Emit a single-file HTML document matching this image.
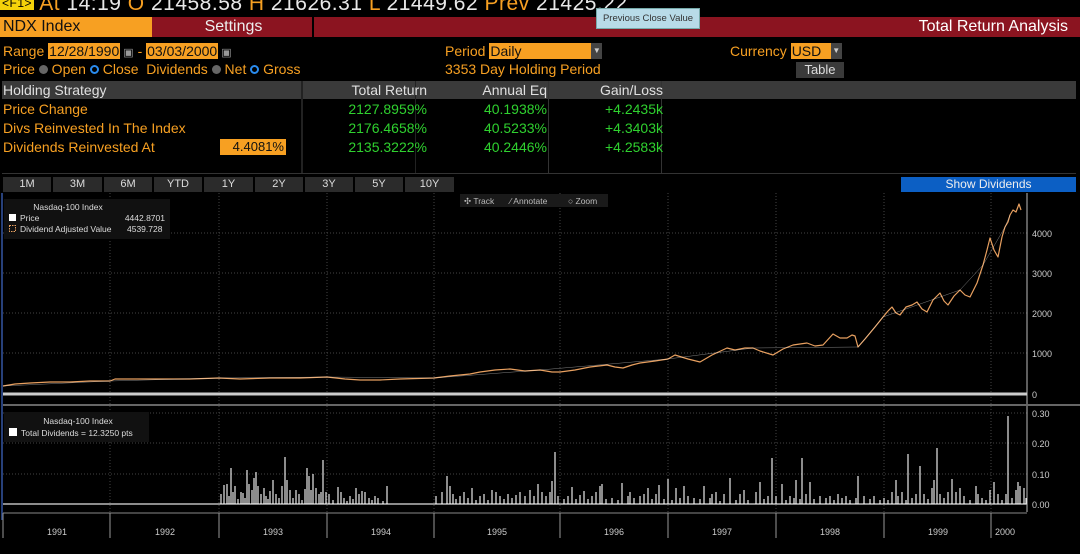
<!DOCTYPE html>
<html><head><meta charset="utf-8"><style>
*{margin:0;padding:0;box-sizing:border-box}
body{width:1080px;height:554px;background:#000;overflow:hidden;position:relative;font-family:"Liberation Sans",sans-serif;color:#f7a022}
.a{position:absolute;white-space:nowrap}
.o{color:#f7a022}.w{color:#e8e8e8}.g{color:#2fd12f}
.box{background:#f7a022;color:#111;padding:0 1px}
.hdr{background:#3a3a3a;color:#e0e0e0}
.btn{position:absolute;top:177px;height:15px;background:#2b2b2b;color:#ddd;font-size:11px;text-align:center;line-height:15px}
.rad{display:inline-block;width:9px;height:9px;border-radius:50%;vertical-align:0px}
</style></head><body>
<div class="a" style="left:0;top:-8px;font-size:21px;color:#f7a022;letter-spacing:0.5px"><span style="background:#f5d20a;color:#000;font-size:12px;padding:0 2px;vertical-align:3px">&lt;F1&gt;</span> At <span class="w">14:19</span>  O <span class="w">21458.58</span>  H <span class="w">21626.31</span>  L <span class="w">21449.62</span>  Prev <span class="w">21425.22</span></div>
<div class="a" style="left:0;top:17px;width:1080px;height:20px;background:#8b1420"></div>
<div class="a" style="left:0;top:17px;width:152px;height:20px;background:#f7a022;color:#111;font-size:16px;line-height:20px;padding-left:3px">NDX Index</div>
<div class="a" style="left:155px;top:17px;width:157px;height:20px;color:#eee;font-size:16px;line-height:20px;text-align:center">Settings</div>
<div class="a" style="left:312px;top:17px;width:2px;height:20px;background:#000"></div>
<div class="a" style="right:12px;top:17px;color:#fff;font-size:16px;line-height:20px">Total Return Analysis</div>
<div class="a" style="left:596px;top:8px;width:104px;height:21px;background:#b8dbe8;color:#333;font-size:9.5px;line-height:20px;text-align:center;border:1px solid #7aa">Previous Close Value</div>
<div class="a" style="left:3px;top:43px;font-size:14px">Range <span class="box">12/28/1990</span><span style="color:#999;font-size:11px"> ▣</span> - <span class="box">03/03/2000</span><span style="color:#999;font-size:11px"> ▣</span></div>
<div class="a" style="left:3px;top:61px;font-size:14px">Price <span class="rad" style="background:#666"></span> Open <span class="rad" style="border:2px solid #2a8cf0"></span> Close &nbsp;Dividends <span class="rad" style="background:#666"></span> Net <span class="rad" style="border:2px solid #2a8cf0"></span> Gross</div>
<div class="a" style="left:445px;top:43px;font-size:14px;line-height:16px">Period <span class="box" style="display:inline-block;width:102px;height:16px;line-height:16px;vertical-align:top">Daily</span><span style="display:inline-block;width:11px;height:16px;background:#444;color:#ccc;font-size:8px;text-align:center;vertical-align:top;line-height:16px">▼</span></div>
<div class="a" style="left:445px;top:61px;font-size:14px">3353 Day Holding Period</div>
<div class="a" style="left:730px;top:43px;font-size:14px;line-height:16px">Currency <span class="box" style="display:inline-block;width:40px;height:16px;line-height:16px;vertical-align:top">USD</span><span style="display:inline-block;width:11px;height:16px;background:#444;color:#ccc;font-size:8px;text-align:center;vertical-align:top;line-height:16px">▼</span></div>
<div class="a" style="left:796px;top:62px;width:48px;height:16px;background:#3a3a3a;color:#ddd;font-size:13px;text-align:center;line-height:16px">Table</div>
<div class="a hdr" style="left:2px;top:81px;width:1074px;height:18px"></div>
<div class="a" style="left:301px;top:81px;width:2px;height:93px;background:#222"></div>
<div class="a" style="left:415px;top:81px;width:1px;height:93px;background:#222"></div>
<div class="a" style="left:548px;top:81px;width:1px;height:93px;background:#333"></div>
<div class="a" style="left:661px;top:81px;width:1px;height:93px;background:#333"></div>
<div class="a" style="left:2px;top:173px;width:1074px;height:1px;background:#333"></div>
<div class="a" style="left:3px;top:81px;font-size:14px;color:#e0e0e0;line-height:18px">Holding Strategy</div>
<div class="a" style="left:303px;top:81px;width:124px;text-align:right;font-size:14px;color:#e0e0e0;line-height:18px">Total Return</div>
<div class="a" style="left:430px;top:81px;width:117px;text-align:right;font-size:14px;color:#e0e0e0;line-height:18px">Annual Eq</div>
<div class="a" style="left:550px;top:81px;width:113px;text-align:right;font-size:14px;color:#e0e0e0;line-height:18px">Gain/Loss</div>
<div class="a" style="left:3px;top:100px;font-size:14px;line-height:19px">Price Change<br>Divs Reinvested In The Index<br>Dividends Reinvested At</div>
<div class="a" style="left:220px;top:139px;width:66px;height:16px;background:#f7a022;color:#111;font-size:13px;text-align:right;line-height:16px;padding-right:2px">4.4081%</div>
<div class="a g" style="left:303px;top:100px;width:124px;text-align:right;font-size:14px;line-height:19px">2127.8959%<br>2176.4658%<br>2135.3222%</div>
<div class="a g" style="left:430px;top:100px;width:117px;text-align:right;font-size:14px;line-height:19px">40.1938%<br>40.5233%<br>40.2446%</div>
<div class="a g" style="left:550px;top:100px;width:113px;text-align:right;font-size:14px;line-height:19px">+4.2435k<br>+4.3403k<br>+4.2583k</div>
<div class="btn" style="left:3px;width:48px">1M</div>
<div class="btn" style="left:53px;width:49px">3M</div>
<div class="btn" style="left:104px;width:48px">6M</div>
<div class="btn" style="left:154px;width:48px">YTD</div>
<div class="btn" style="left:204px;width:49px">1Y</div>
<div class="btn" style="left:255px;width:48px">2Y</div>
<div class="btn" style="left:305px;width:48px">3Y</div>
<div class="btn" style="left:355px;width:48px">5Y</div>
<div class="btn" style="left:405px;width:49px">10Y</div>
<div class="a" style="left:901px;top:177px;width:175px;height:15px;background:#0c5fc4;color:#eee;font-size:12px;text-align:center;line-height:15px">Show Dividends</div>
<svg class="a" style="left:0;top:193px" width="1080" height="361" viewBox="0 193 1080 361">
<g stroke="#444" stroke-width="1" stroke-dasharray="1,2">
<line x1="3" y1="233" x2="1027" y2="233"/><line x1="3" y1="273" x2="1027" y2="273"/><line x1="3" y1="313" x2="1027" y2="313"/><line x1="3" y1="353" x2="1027" y2="353"/>
<line x1="3" y1="443" x2="1027" y2="443"/><line x1="3" y1="474" x2="1027" y2="474"/><line x1="3" y1="413" x2="1027" y2="413"/>
<line x1="110" y1="193" x2="110" y2="512"/><line x1="219" y1="193" x2="219" y2="512"/><line x1="327" y1="193" x2="327" y2="512"/><line x1="434" y1="193" x2="434" y2="512"/><line x1="560" y1="193" x2="560" y2="512"/><line x1="668" y1="193" x2="668" y2="512"/><line x1="776" y1="193" x2="776" y2="512"/><line x1="884" y1="193" x2="884" y2="512"/><line x1="991" y1="193" x2="991" y2="512"/>
</g>
<line x1="2" y1="193" x2="2" y2="520" stroke="#27407a" stroke-width="2"/>
<line x1="1027" y1="193" x2="1027" y2="512" stroke="#bbb" stroke-width="1"/>
<line x1="3" y1="394" x2="1027" y2="394" stroke="#ccc" stroke-width="3"/>
<line x1="3" y1="405" x2="1080" y2="405" stroke="#666" stroke-width="2"/>
<line x1="3" y1="504" x2="1027" y2="504" stroke="#bbb" stroke-width="1.5"/>
<line x1="3" y1="513" x2="1027" y2="513" stroke="#888" stroke-width="1"/>
<g stroke="#999" stroke-width="1"><line x1="3" y1="513" x2="3" y2="538"/><line x1="110" y1="513" x2="110" y2="538"/><line x1="219" y1="513" x2="219" y2="538"/><line x1="327" y1="513" x2="327" y2="538"/><line x1="434" y1="513" x2="434" y2="538"/><line x1="560" y1="513" x2="560" y2="538"/><line x1="668" y1="513" x2="668" y2="538"/><line x1="776" y1="513" x2="776" y2="538"/><line x1="884" y1="513" x2="884" y2="538"/><line x1="991" y1="513" x2="991" y2="538"/></g>
<g fill="#ccc" font-size="9" font-family="Liberation Sans,sans-serif">
<text x="1032" y="237">4000</text><text x="1032" y="277">3000</text><text x="1032" y="317">2000</text><text x="1032" y="357">1000</text><text x="1032" y="398">0</text>
<text x="1032" y="417">0.30</text><text x="1032" y="447">0.20</text><text x="1032" y="478">0.10</text><text x="1032" y="508">0.00</text>
<g text-anchor="middle"><text x="57" y="535">1991</text><text x="165" y="535">1992</text><text x="273" y="535">1993</text><text x="381" y="535">1994</text><text x="497" y="535">1995</text><text x="614" y="535">1996</text><text x="722" y="535">1997</text><text x="830" y="535">1998</text><text x="938" y="535">1999</text><text x="1005" y="535">2000</text></g>
</g>
<polyline fill="none" stroke="#e8a060" stroke-width="1.2" stroke-linejoin="round" points="3,386 15,384 30,383 50,382 70,382 90,381 110,381 115,379 140,379 160,379 190,379 219,378 240,379 270,378 300,378 327,377 345,379 360,380 380,380 400,379 434,378 450,376 470,374 480,372 495,370 510,369 525,371 540,370 552,372 560,372 575,370 590,367 607,365 615,367 623,368 632,365 640,363 655,361 668,359 675,355 688,359 700,362 712,355 727,348 735,350 745,348 753,348 760,351 773,355 783,349 793,345 807,343 815,346 823,345 833,334 840,338 847,338 852,335 855,336 858,347 865,339 875,327 883,317 888,311 892,307 896,313 900,315 906,307 912,305 917,302 922,309 927,312 933,300 940,293 944,301 948,305 954,296 960,290 965,295 970,297 977,283 983,265 987,250 990,238 994,250 998,257 1002,237 1005,227 1008,222 1010,215 1013,210 1016,212 1019,204 1021,210"/>
<polyline fill="none" stroke="#fff" stroke-width="0.5" opacity="0.5" points="3,386 110,381 219,378 327,377 434,378 540,370 668,359 753,348 858,347 883,317 960,290 983,265 1005,227 1010,215"/>
<path stroke="#fff" stroke-width="1.1" fill="none" d="M221,504v-10M224,504v-19M227,504v-20M229,504v-8M231,504v-36M233,504v-12M235,504v-18M238,504v-5M241,504v-12M243,504v-11M245,504v-6M247,504v-34M249,504v-20M252,504v-14M254,504v-26M256,504v-32M258,504v-18M261,504v-10M264,504v-16M266,504v-8M268,504v-5M270,504v-13M273,504v-24M276,504v-10M279,504v-6M282,504v-18M285,504v-47M287,504v-24M290,504v-14M293,504v-6M296,504v-14M299,504v-10M302,504v-4M305,504v-15M307,504v-36M309,504v-28M311,504v-14M313,504v-30M316,504v-16M319,504v-10M321,504v-12M323,504v-44M326,504v-12M329,504v-10M333,504v-4M338,504v-17M341,504v-12M344,504v-6M347,504v-3M350,504v-8M353,504v-5M356,504v-16M359,504v-10M362,504v-13M365,504v-12M369,504v-6M372,504v-4M375,504v-8M378,504v-6M383,504v-3M387,504v-18M436,504v-8M442,504v-12M447,504v-28M450,504v-18M453,504v-10M456,504v-5M460,504v-8M464,504v-12M468,504v-6M472,504v-16M476,504v-4M480,504v-8M484,504v-10M488,504v-4M492,504v-14M496,504v-12M500,504v-8M504,504v-5M508,504v-10M512,504v-6M516,504v-9M520,504v-12M525,504v-8M530,504v-14M534,504v-8M538,504v-20M542,504v-12M546,504v-8M550,504v-12M552,504v-23M555,504v-52M558,504v-8M564,504v-5M568,504v-8M572,504v-17M576,504v-5M580,504v-9M584,504v-13M588,504v-5M592,504v-8M596,504v-12M600,504v-18M602,504v-20M606,504v-5M612,504v-6M618,504v-4M622,504v-21M628,504v-8M630,504v-12M634,504v-6M640,504v-8M644,504v-10M648,504v-16M652,504v-5M656,504v-10M659,504v-19M664,504v-5M668,504v-25M672,504v-4M676,504v-16M680,504v-6M684,504v-18M688,504v-8M694,504v-6M700,504v-5M704,504v-18M710,504v-6M712,504v-10M716,504v-12M720,504v-3M724,504v-10M730,504v-26M736,504v-4M740,504v-10M744,504v-14M748,504v-4M756,504v-12M760,504v-22M764,504v-5M768,504v-8M772,504v-46M776,504v-8M782,504v-20M786,504v-4M790,504v-8M794,504v-6M796,504v-24M800,504v-5M802,504v-46M806,504v-10M810,504v-22M814,504v-5M820,504v-8M826,504v-6M830,504v-8M834,504v-4M838,504v-10M842,504v-6M846,504v-8M850,504v-4M856,504v-6M858,504v-28M864,504v-8M870,504v-5M874,504v-8M880,504v-4M884,504v-6M888,504v-4M892,504v-12M896,504v-24M898,504v-8M902,504v-12M906,504v-4M908,504v-50M912,504v-6M916,504v-10M920,504v-38M924,504v-10M928,504v-5M932,504v-16M934,504v-24M937,504v-56M940,504v-10M944,504v-6M948,504v-12M952,504v-25M956,504v-12M960,504v-16M964,504v-8M970,504v-4M976,504v-18M978,504v-10M982,504v-6M986,504v-4M990,504v-14M994,504v-22M998,504v-10M1002,504v-4M1006,504v-10M1008,504v-88M1012,504v-6M1016,504v-14M1018,504v-22M1020,504v-18M1024,504v-16M1026,504v-6"/>
<rect x="4" y="199" width="166" height="40" fill="#111"/>
<g font-family="Liberation Sans,sans-serif" font-size="8.5" fill="#ddd">
<text x="68" y="210" text-anchor="middle">Nasdaq-100 Index</text>
<rect x="9" y="214" width="7" height="7" fill="#fff"/><text x="20" y="221">Price</text><text x="165" y="221" text-anchor="end">4442.8701</text>
<rect x="9.5" y="225.5" width="6" height="6" fill="none" stroke="#e8a060" stroke-dasharray="1.5,1"/><text x="20" y="232">Dividend Adjusted Value</text><text x="127" y="232">4539.728</text>
</g>
<rect x="4" y="412" width="145" height="30" fill="#111"/>
<g font-family="Liberation Sans,sans-serif" font-size="8.5" fill="#ddd">
<text x="78" y="424" text-anchor="middle">Nasdaq-100 Index</text>
<rect x="9" y="428" width="8" height="8" fill="#fff"/><text x="21" y="436">Total Dividends = 12.3250 pts</text>
</g>
<rect x="460" y="194" width="148" height="13" fill="#1a1a1a"/>
<g font-family="Liberation Sans,sans-serif" font-size="8.5" fill="#bbb">
<text x="464" y="204">✣ Track</text><text x="510" y="204">⁄ Annotate</text><text x="568" y="204">○ Zoom</text>
</g>
</svg>
</body></html>
